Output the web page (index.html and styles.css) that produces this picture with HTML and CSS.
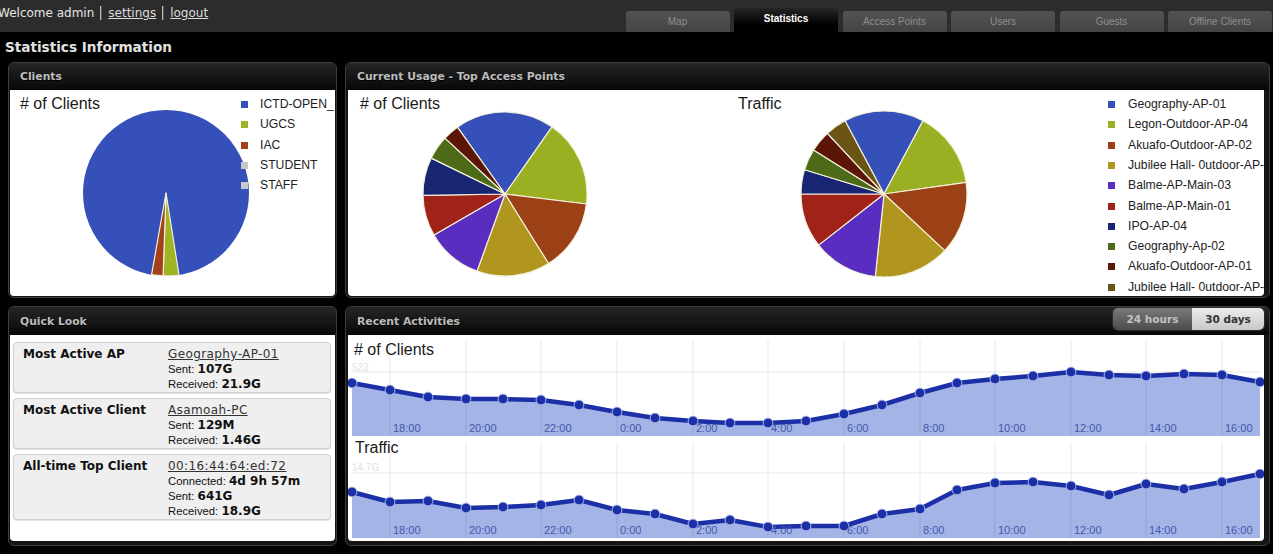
FILE: index.html
```html
<!DOCTYPE html>
<html>
<head>
<meta charset="utf-8">
<title>Statistics Information</title>
<link rel="stylesheet" href="styles.css">
</head>
<body>
<div class="topbar">
  <div class="welcome">
    <span>Welcome admin</span><span class="sep"></span><a href="#">settings</a><span class="sep"></span><a href="#">logout</a>
  </div>
  <div class="tabs">
    <div class="tab">Map</div>
    <div class="tab active">Statistics</div>
    <div class="tab">Access Points</div>
    <div class="tab">Users</div>
    <div class="tab">Guests</div>
    <div class="tab">Offline Clients</div>
  </div>
</div>
<div class="page-title">Statistics Information</div>
<div class="grid">
  <div class="panel">
    <div class="panel-head">Clients</div>
    <div class="panel-body">
      <svg class="chart" viewBox="10 90 325 206">
        <text class="ttl" x="20" y="109"># of Clients</text>
        <circle cx="166" cy="193" r="83" fill="#3550b8"/>
        <g class="slice">
          <path d="M166,193 L179,275 A83,83 0 0 1 163.1,275.9 Z" fill="#9fb523"/>
          <path d="M166,193 L163.1,275.9 A83,83 0 0 1 151.6,274.7 Z" fill="#a2421a"/>
        </g>
        <rect x="241" y="101" width="7" height="7" fill="#3550b8"/>
        <text class="lg" x="260" y="108">ICTD-OPEN_</text>
        <rect x="241" y="121" width="7" height="7" fill="#9fb523"/>
        <text class="lg" x="260" y="128">UGCS</text>
        <rect x="241" y="142" width="7" height="7" fill="#a2421a"/>
        <text class="lg" x="260" y="149">IAC</text>
        <rect x="241" y="162" width="7" height="7" fill="#c8c8c8"/>
        <text class="lg" x="260" y="169">STUDENT</text>
        <rect x="241" y="182" width="7" height="7" fill="#c8c8c8"/>
        <text class="lg" x="260" y="189">STAFF</text>
      </svg>
    </div>
  </div>
  <div class="panel wide">
    <div class="panel-head">Current Usage - Top Access Points</div>
    <div class="panel-body">
      <svg class="chart" viewBox="348 90 916 206">
        <text class="ttl" x="360" y="109"># of Clients</text>
        <text class="ttl" x="738" y="109">Traffic</text>
        <g class="slice">
          <path d="M505,194 L457.4,127.2 A82,82 0 0 1 552,126.8 Z" fill="#3550b8"/>
          <path d="M505,194 L552,126.8 A82,82 0 0 1 586.4,204 Z" fill="#9aaf22"/>
          <path d="M505,194 L586.4,204 A82,82 0 0 1 548.5,263.5 Z" fill="#9b4115"/>
          <path d="M505,194 L548.5,263.5 A82,82 0 0 1 477,271.1 Z" fill="#b0951e"/>
          <path d="M505,194 L477,271.1 A82,82 0 0 1 434,235 Z" fill="#5a2dc1"/>
          <path d="M505,194 L434,235 A82,82 0 0 1 423,195.4 Z" fill="#a02219"/>
          <path d="M505,194 L423,195.4 A82,82 0 0 1 431.3,158.1 Z" fill="#182573"/>
          <path d="M505,194 L431.3,158.1 A82,82 0 0 1 445,138.1 Z" fill="#4d6a18"/>
          <path d="M505,194 L445,138.1 A82,82 0 0 1 457.4,127.2 Z" fill="#5c1608"/>
        </g>
        <g class="slice">
          <path d="M884,194 L845,120.7 A83,83 0 0 1 923,120.7 Z" fill="#3550b8"/>
          <path d="M884,194 L923,120.7 A83,83 0 0 1 966.2,182.4 Z" fill="#9aaf22"/>
          <path d="M884,194 L966.2,182.4 A83,83 0 0 1 944.7,250.6 Z" fill="#9b4115"/>
          <path d="M884,194 L944.7,250.6 A83,83 0 0 1 875.3,276.5 Z" fill="#b0951e"/>
          <path d="M884,194 L875.3,276.5 A83,83 0 0 1 818.6,245.1 Z" fill="#5a2dc1"/>
          <path d="M884,194 L818.6,245.1 A83,83 0 0 1 801,194 Z" fill="#a02219"/>
          <path d="M884,194 L801,194 A83,83 0 0 1 804.6,169.7 Z" fill="#182573"/>
          <path d="M884,194 L804.6,169.7 A83,83 0 0 1 813.6,150 Z" fill="#4d6a18"/>
          <path d="M884,194 L813.6,150 A83,83 0 0 1 827.4,133.3 Z" fill="#5c1608"/>
          <path d="M884,194 L827.4,133.3 A83,83 0 0 1 845,120.7 Z" fill="#6a5416"/>
        </g>
        <rect x="1108" y="101" width="7" height="7" fill="#3550b8"/>
        <text class="lg" x="1128" y="108">Geography-AP-01</text>
        <rect x="1108" y="121" width="7" height="7" fill="#9aaf22"/>
        <text class="lg" x="1128" y="128.3">Legon-Outdoor-AP-04</text>
        <rect x="1108" y="142" width="7" height="7" fill="#9b4115"/>
        <text class="lg" x="1128" y="148.6">Akuafo-Outdoor-AP-02</text>
        <rect x="1108" y="162" width="7" height="7" fill="#b0951e"/>
        <text class="lg" x="1128" y="168.9">Jubilee Hall- 0utdoor-AP-03</text>
        <rect x="1108" y="182" width="7" height="7" fill="#5a2dc1"/>
        <text class="lg" x="1128" y="189.2">Balme-AP-Main-03</text>
        <rect x="1108" y="203" width="7" height="7" fill="#a02219"/>
        <text class="lg" x="1128" y="209.5">Balme-AP-Main-01</text>
        <rect x="1108" y="223" width="7" height="7" fill="#182573"/>
        <text class="lg" x="1128" y="229.8">IPO-AP-04</text>
        <rect x="1108" y="243" width="7" height="7" fill="#4d6a18"/>
        <text class="lg" x="1128" y="250.1">Geography-Ap-02</text>
        <rect x="1108" y="263" width="7" height="7" fill="#5c1608"/>
        <text class="lg" x="1128" y="270.4">Akuafo-Outdoor-AP-01</text>
        <rect x="1108" y="284" width="7" height="7" fill="#6a5416"/>
        <text class="lg" x="1128" y="290.7">Jubilee Hall- 0utdoor-AP-01</text>
      </svg>
    </div>
  </div>
  <div class="panel low">
    <div class="panel-head">Quick Look</div>
    <div class="panel-body ql">
      <div class="ql-card">
        <div class="ql-label">Most Active AP</div>
        <div class="ql-vals">
          <a class="ql-link" href="#">Geography-AP-01</a>
          <div>Sent: <b>107G</b></div>
          <div>Received: <b>21.9G</b></div>
        </div>
      </div>
      <div class="ql-card">
        <div class="ql-label">Most Active Client</div>
        <div class="ql-vals">
          <a class="ql-link" href="#">Asamoah-PC</a>
          <div>Sent: <b>129M</b></div>
          <div>Received: <b>1.46G</b></div>
        </div>
      </div>
      <div class="ql-card">
        <div class="ql-label">All-time Top Client</div>
        <div class="ql-vals">
          <a class="ql-link" href="#">00:16:44:64:ed:72</a>
          <div>Connected: <b>4d 9h 57m</b></div>
          <div>Sent: <b>641G</b></div>
          <div>Received: <b>18.9G</b></div>
        </div>
      </div>
    </div>
  </div>
  <div class="panel wide low">
    <div class="panel-head">
      <span>Recent Activities</span>
      <div class="range">
        <span class="rbtn on">24 hours</span><span class="rbtn">30 days</span>
      </div>
    </div>
    <div class="panel-body">
      <svg class="chart" viewBox="348 335 916 206">
        <defs>
          <marker id="dot" viewBox="0 0 12 12" refX="6" refY="6" markerWidth="12" markerHeight="12" markerUnits="userSpaceOnUse">
            <circle cx="6" cy="6" r="4.9" fill="#1b2fa6" stroke="#b7c3ee" stroke-width="0.9"/>
          </marker>
        </defs>
        <polygon class="area" points="352,383 390,390 428,397 466,399 503,399 541,400 579,405 617,412 655,418 693,421 730,423 768,423 806,421 844,414 882,405 920,393 957,383 995,379 1033,376 1071,372 1109,375 1146,376 1184,374 1222,375 1260,382 1260,436 352,436"/>
        <polygon class="area" points="352,492 390,502 428,501 466,508 503,507 541,505 579,500 617,510 655,514 693,524 730,520 768,527 806,526 844,526 882,514 920,509 957,490 995,483 1033,482 1071,486 1109,495 1146,484 1184,489 1222,482 1260,474 1260,538 352,538"/>
        <g class="gl">
          <path d="M390,340V436M466,340V436M541,340V436M617,340V436M693,340V436M768,340V436M844,340V436M920,340V436M995,340V436M1071,340V436M1146,340V436M1222,340V436M351,372H1262"/>
          <path d="M390,442V538M466,442V538M541,442V538M617,442V538M693,442V538M768,442V538M844,442V538M920,442V538M995,442V538M1071,442V538M1146,442V538M1222,442V538M351,473H1262"/>
        </g>
        <text class="ttl" x="354" y="355"># of Clients</text>
        <text class="ax" x="352" y="371">523</text>
        <text class="ttl" x="355" y="453">Traffic</text>
        <text class="ax" x="352" y="471">14.7G</text>
        <polyline class="ln" points="352,383 390,390 428,397 466,399 503,399 541,400 579,405 617,412 655,418 693,421 730,423 768,423 806,421 844,414 882,405 920,393 957,383 995,379 1033,376 1071,372 1109,375 1146,376 1184,374 1222,375 1260,382"/>
        <polyline class="ln" points="352,492 390,502 428,501 466,508 503,507 541,505 579,500 617,510 655,514 693,524 730,520 768,527 806,526 844,526 882,514 920,509 957,490 995,483 1033,482 1071,486 1109,495 1146,484 1184,489 1222,482 1260,474"/>
        <g class="xl">
          <text x="393" y="432">18:00</text><text x="469" y="432">20:00</text><text x="544" y="432">22:00</text>
          <text x="620" y="432">0:00</text><text x="696" y="432">2:00</text><text x="771" y="432">4:00</text>
          <text x="847" y="432">6:00</text><text x="923" y="432">8:00</text><text x="998" y="432">10:00</text>
          <text x="1074" y="432">12:00</text><text x="1149" y="432">14:00</text><text x="1225" y="432">16:00</text>
        </g>
        <g class="xl">
          <text x="393" y="534">18:00</text><text x="469" y="534">20:00</text><text x="544" y="534">22:00</text>
          <text x="620" y="534">0:00</text><text x="696" y="534">2:00</text><text x="771" y="534">4:00</text>
          <text x="847" y="534">6:00</text><text x="923" y="534">8:00</text><text x="998" y="534">10:00</text>
          <text x="1074" y="534">12:00</text><text x="1149" y="534">14:00</text><text x="1225" y="534">16:00</text>
        </g>
      </svg>
    </div>
  </div>
</div>
</body>
</html>
```
FILE: styles.css
```css
* { box-sizing: border-box; }
html, body { margin: 0; padding: 0; }
body {
  width: 1273px;
  height: 554px;
  overflow: hidden;
  background: #000;
  font-family: "DejaVu Sans", sans-serif;
}

.topbar {
  height: 32px;
  background: #2c2c2c;
  display: flex;
  align-items: flex-start;
}
.welcome {
  padding-top: 6px;
  margin-left: -2px;
  display: flex;
  align-items: center;
  font-size: 12px;
  line-height: 14px;
  color: #e6e6e6;
}
.welcome a { color: #dcdcdc; text-decoration: underline; }
.sep {
  width: 2px;
  height: 14px;
  border-left: 1px solid #bdbdbd;
  border-right: 1px solid #555;
  margin: 0 6px;
}
.tabs {
  margin-left: auto;
  height: 32px;
  display: flex;
  align-items: flex-end;
  gap: 4.5px;
  padding-right: 1px;
}
.tab {
  width: 104px;
  height: 21px;
  background: linear-gradient(#535353, #444);
  border-radius: 3px 3px 0 0;
  color: #8e8e8e;
  font-family: "Liberation Sans", Arial, sans-serif;
  font-size: 10px;
  display: flex;
  align-items: center;
  justify-content: center;
}
.tab.active {
  height: 24px;
  padding-bottom: 4px;
  background: linear-gradient(#262626, #000 70%);
  color: #fff;
  font-weight: bold;
}

.page-title {
  height: 30px;
  padding: 7px 0 0 5px;
  font-size: 13.6px;
  line-height: 16px;
  font-weight: bold;
  color: #e2e2e2;
}

.grid {
  display: grid;
  grid-template-columns: 329px 925px;
  grid-template-rows: 236px 240px;
  gap: 8px;
  padding-left: 8px;
}
.panel {
  border: 1px solid #3e3e3e;
  border-radius: 6px;
  background: #151515;
  display: flex;
  flex-direction: column;
  overflow: hidden;
}
.panel-head {
  height: 27px;
  flex: none;
  display: flex;
  align-items: center;
  justify-content: space-between;
  padding: 0 5px 0 11px;
  background: linear-gradient(#262626, #070707);
  color: #bdbdbd;
  font-size: 10.8px;
  font-weight: bold;
  text-shadow: 0 1px 0 #000;
}
.panel.low .panel-head { height: 28px; }
.panel-body {
  flex: 1;
  min-height: 0;
  background: #fff;
  margin: 0 1px 1px 1px;
  border-radius: 0 0 4px 4px;
  overflow: hidden;
}
.panel.wide .panel-body { margin: 0 5px 1px 2px; }
.panel.low .panel-body { margin-bottom: 4px; }

.chart { display: block; width: 100%; height: 100%; }
.chart text { font-family: "Liberation Sans", Arial, sans-serif; }
.ttl { font-size: 16px; fill: #1a1a1a; }
.lg { font-size: 12.2px; fill: #222; }
.slice path { stroke: #f3f0dc; stroke-width: 1.2; stroke-linejoin: round; }
.area { fill: #a4b4e6; }
.gl path { stroke: rgba(0, 0, 0, 0.085); stroke-width: 1; fill: none; }
.ln {
  fill: none;
  stroke: #1b2fa6;
  stroke-width: 4.5;
  stroke-linejoin: round;
  marker-start: url(#dot);
  marker-mid: url(#dot);
  marker-end: url(#dot);
}
.ax { font-size: 10px; fill: #e2e2e2; }
.xl text { font-size: 11px; fill: #4657ad; }

.range {
  align-self: flex-start;
  margin-top: 1px;
  display: flex;
  height: 22px;
  border-radius: 5px;
  overflow: hidden;
  box-shadow: 0 0 0 1px #2a2a2a;
}
.rbtn {
  display: flex;
  align-items: center;
  justify-content: center;
  width: 72px;
  font-size: 10.5px;
  font-weight: bold;
  color: #333;
  text-shadow: none;
  background: linear-gradient(#ececec, #c9c9c9);
}
.rbtn.on {
  width: 79px;
  color: #c2c2c2;
  background: linear-gradient(#7a7a7a, #4c4c4c);
}

.ql {
  padding: 7px 4px 0 3px;
  display: flex;
  flex-direction: column;
  gap: 5px;
}
.ql-card {
  display: grid;
  grid-template-columns: 145px 1fr;
  padding: 4px 8px 0 9px;
  border: 1px solid #cfcfcf;
  border-radius: 4px;
  background: #efefef;
  box-shadow: 0 1px 1px rgba(0, 0, 0, 0.12);
  font-size: 12px;
  line-height: 15px;
  color: #111;
}
.ql-label { font-weight: bold; }
.ql-vals {
  font-family: "Liberation Sans", Arial, sans-serif;
  font-size: 11.3px;
}
.ql-vals b {
  font-family: "DejaVu Sans", sans-serif;
  font-size: 12px;
}
.ql-link {
  display: block;
  color: #333;
  text-decoration: underline;
  font-family: "DejaVu Sans", sans-serif;
  font-size: 12px;
  letter-spacing: 0.4px;
}
```
